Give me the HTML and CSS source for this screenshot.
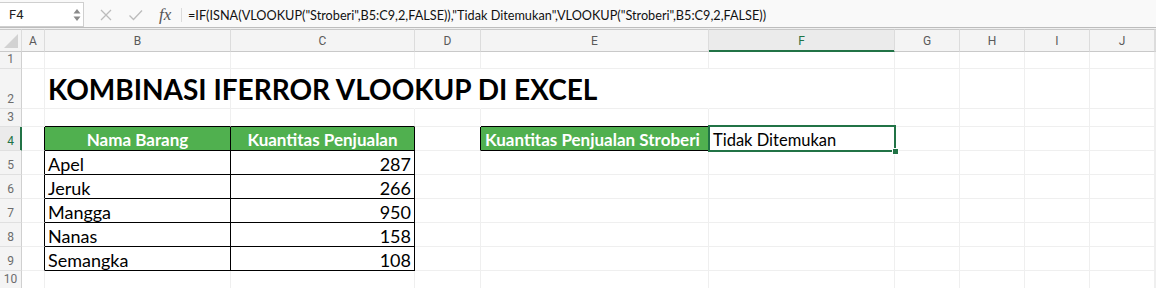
FILE: index.html
```html
<!DOCTYPE html>
<html>
<head>
    <meta charset="utf-8">
    <title>Kombinasi IFERROR VLOOKUP di Excel</title>
    <link rel="stylesheet" href="styles.css">
</head>
<body>
    <!-- formula bar -->
    <div class="fbar">
        <div class="namebox">
            <span class="ref">F4</span>
            <svg class="spin" width="8" height="16" viewBox="0 0 8 16"><path d="M4 2 L7.5 6.5 L0.5 6.5 Z M4 14 L7.5 9.5 L0.5 9.5 Z" fill="#8a8a8a"/></svg>
        </div>
        <div class="tools">
            <svg class="ico" width="14" height="14" viewBox="0 0 14 14"><path d="M2 2 L12 12 M12 2 L2 12" stroke="#bcbcbc" stroke-width="1.3"/></svg>
            <svg class="ico" width="16" height="14" viewBox="0 0 16 14"><path d="M1.5 7.5 L5.5 11.5 L14 2.5" stroke="#bcbcbc" stroke-width="1.3" fill="none"/></svg>
            <span class="fx">fx</span>
        </div>
        <div class="formula">=IF(ISNA(VLOOKUP("Stroberi",B5:C9,2,FALSE)),"Tidak Ditemukan",VLOOKUP("Stroberi",B5:C9,2,FALSE))</div>
    </div>

    <!-- the worksheet -->
    <div class="grid">
    <table class="sheet">
        <colgroup>
            <col class="w-rh"><col class="w-a"><col class="w-b"><col class="w-c"><col class="w-d"><col class="w-e"><col class="w-f"><col class="w-g"><col class="w-g"><col class="w-g"><col class="w-g"><col class="w-k">
        </colgroup>
        <tr class="colhead">
            <th class="corner"><svg width="14" height="14" viewBox="0 0 14 14"><path d="M14 0 L14 14 L0 14 Z" fill="#d2d2d2"/></svg></th>
            <th>A</th><th>B</th><th>C</th><th>D</th><th>E</th><th class="cur">F</th><th>G</th><th>H</th><th>I</th><th>J</th><th></th>
        </tr>
        <tr class="r-sm">
            <th class="rh">1</th><td></td><td></td><td></td><td></td><td></td><td></td><td></td><td></td><td></td><td></td><td></td>
        </tr>
        <tr class="r-title">
            <th class="rh">2</th><td></td><td class="title">KOMBINASI IFERROR VLOOKUP DI EXCEL</td><td class="nogrid"></td><td class="nogrid"></td><td class="nogrid"></td><td></td><td></td><td></td><td></td><td></td><td></td>
        </tr>
        <tr class="r-gap">
            <th class="rh">3</th><td></td><td class="bb"></td><td class="bb"></td><td></td><td class="bb"></td><td class="bb"></td><td></td><td></td><td></td><td></td><td></td>
        </tr>
        <tr class="r-row">
            <th class="rh cur">4</th><td class="br"></td><td class="hd br bb">Nama Barang</td><td class="hd br bb">Kuantitas Penjualan</td><td class="br"></td><td class="hd left br bb">Kuantitas Penjualan Stroberi</td><td class="picked br bb">Tidak Ditemukan<div class="selbox"></div><div class="handle"></div></td><td></td><td></td><td></td><td></td><td></td>
        </tr>
        <tr class="r-row">
            <th class="rh">5</th><td class="br"></td><td class="br bb">Apel</td><td class="num br bb">287</td><td></td><td></td><td></td><td></td><td></td><td></td><td></td><td></td>
        </tr>
        <tr class="r-row">
            <th class="rh">6</th><td class="br"></td><td class="br bb">Jeruk</td><td class="num br bb">266</td><td></td><td></td><td></td><td></td><td></td><td></td><td></td><td></td>
        </tr>
        <tr class="r-row">
            <th class="rh">7</th><td class="br"></td><td class="br bb">Mangga</td><td class="num br bb">950</td><td></td><td></td><td></td><td></td><td></td><td></td><td></td><td></td>
        </tr>
        <tr class="r-row">
            <th class="rh">8</th><td class="br"></td><td class="br bb">Nanas</td><td class="num br bb">158</td><td></td><td></td><td></td><td></td><td></td><td></td><td></td><td></td>
        </tr>
        <tr class="r-row">
            <th class="rh">9</th><td class="br"></td><td class="br bb">Semangka</td><td class="num br bb">108</td><td></td><td></td><td></td><td></td><td></td><td></td><td></td><td></td>
        </tr>
        <tr class="r-last">
            <th class="rh">10</th><td></td><td></td><td></td><td></td><td></td><td></td><td></td><td></td><td></td><td></td><td></td>
        </tr>
    </table>
    </div>
</body>
</html>
```

FILE: styles.css
```css
body { margin: 0; width: 1156px; height: 288px; overflow: hidden; background: #fff; font-family: Lato, "Liberation Sans", sans-serif; }

/* formula bar */
.fbar { box-sizing: border-box; height: 28px; padding-top: 2px; display: flex; align-items: stretch; background: #f9f9f9; border-bottom: 1px solid #bdbdbd; }
.namebox { box-sizing: border-box; width: 84px; height: 25px; display: flex; align-items: center; justify-content: space-between; padding: 0 2px 0 9px; background: #fff; border: 1px solid #cfcfcf; border-left: none; }
.ref { font-family: Roboto, "Liberation Sans", sans-serif; font-size: 13px; color: #222; }
.tools { width: 98px; display: flex; align-items: center; gap: 15px; padding-left: 15px; box-sizing: border-box; border-right: 1px solid #dcdcdc; margin: 6px 0 5px; }
.fx { font-family: "Liberation Serif", serif; font-style: italic; font-size: 17px; color: #555; margin-left: 0; }
.formula { padding-left: 6px; display: flex; align-items: center; font-size: 12.7px; color: #111; white-space: nowrap; }

/* sheet */
.grid { padding-top: 1px; background: #f0f0f0; }
.sheet { table-layout: fixed; border-collapse: separate; border-spacing: 0; width: 1156px; background: #fff; }
.w-rh { width: 22px; }
.w-a { width: 23px; }
.w-b { width: 186px; }
.w-c { width: 184px; }
.w-d { width: 66px; }
.w-e { width: 228px; }
.w-f { width: 186px; }
.w-g { width: 65px; }
.w-k { width: 1px; }

th { font-family: Roboto, "Liberation Sans", sans-serif; font-weight: normal; font-size: 12px; color: #5a5a5a; background: #f4f4f4; padding: 0; }
.colhead { height: 23px; }
.colhead th { border-top: 1px solid #c9c9c9; border-bottom: 1px solid #c9c9c9; border-right: 1px solid #dcdcdc; }
.colhead th.cur { color: #217346; background: #ebebeb; border-bottom-color: #217346; box-shadow: inset 0 -1px 0 #217346; }
.corner { text-align: right; vertical-align: bottom; line-height: 0; }
.corner svg { margin: 0 3px 3px 0; }

.rh { border-right: 1px solid #d0d0d0; border-bottom: 1px solid #e0e0e0; vertical-align: bottom; line-height: 14px; padding-bottom: 2px; color: #6c6c6c; }
.rh.cur { color: #217346; background: #ebebeb; border-right-color: #217346; box-shadow: inset -1px 0 0 #217346; }

.r-sm { height: 16px; }
.r-title { height: 40px; }
.r-gap { height: 18px; }
.r-row { height: 24px; }
.r-last { height: 18px; }

td { border-right: 1px solid #efefef; border-bottom: 1px solid #efefef; padding: 0 3px; font-size: 18px; line-height: 20px; vertical-align: bottom; color: #000; white-space: nowrap; }
td.nogrid { border-right-color: #fff; }
.title { font-weight: bold; font-size: 28px; line-height: 34px; padding-bottom: 2px; overflow: visible; }
.br { border-right-color: #000; }
.bb { border-bottom-color: #000; }
.hd { background: #50b04f; color: #fff; font-weight: bold; font-size: 17px; text-align: center; }
.hd.left { text-align: left; padding-left: 4px; }
.num { text-align: right; }
.picked { position: relative; padding-left: 4px; font-size: 16.5px; }
.selbox { position: absolute; top: -2px; left: -1px; right: -2px; bottom: -2px; border: 2px solid #217346; }
.handle { position: absolute; right: -5px; bottom: -5px; width: 5px; height: 5px; background: #217346; border: 1px solid #fff; }
```
